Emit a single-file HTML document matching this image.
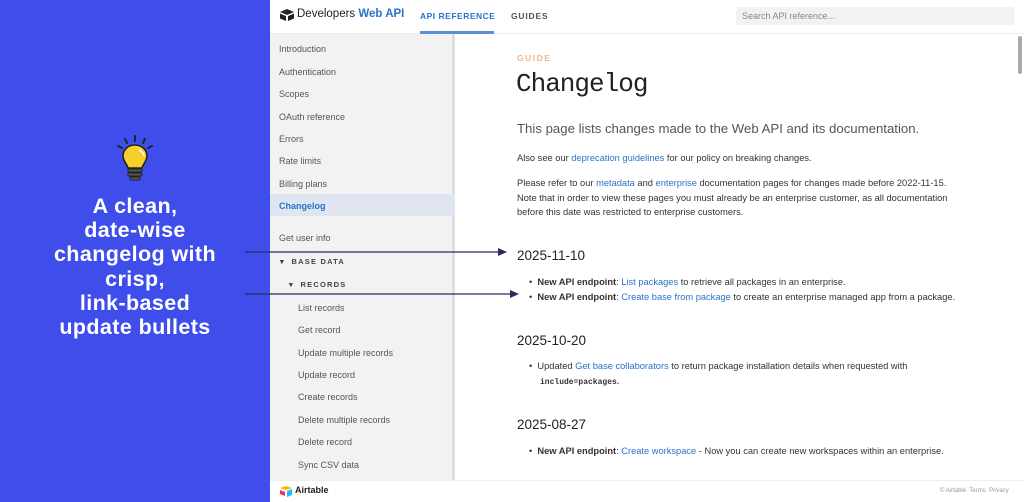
<!DOCTYPE html>
<html><head><meta charset="utf-8"><style>
*{margin:0;padding:0;box-sizing:border-box}
body{width:1024px;height:502px;overflow:hidden;position:relative;background:#fff;font-family:"Liberation Sans",sans-serif;color:#333}
.a{position:absolute;white-space:nowrap}
.left{position:absolute;left:0;top:0;width:270px;height:502px;background:#3f4eeb}
.cap{position:absolute;left:0;width:270px;top:194px;text-align:center;color:#fff;font-weight:bold;font-size:21.5px;line-height:24.2px;letter-spacing:0.4px}
.side{position:absolute;left:270px;top:34px;width:185px;height:446px;background:#f2f2f2;border-right:3px solid #ddd}
.nav{font-size:9px;color:#555}
.b{color:#2a72c8}
.t{font-size:9.3px;color:#333}
h2{position:absolute;font-weight:normal;font-size:13.5px;color:#222}
</style></head><body>
<div class="left"></div>
<svg class="a" style="left:108px;top:133px" width="52" height="52" viewBox="0 0 52 52">
<g stroke="#222" stroke-width="2" stroke-linecap="round"><line x1="27" y1="3" x2="27" y2="8"/><line x1="17" y1="6" x2="19" y2="10"/><line x1="37" y1="6" x2="35" y2="10"/><line x1="10" y1="13" x2="14" y2="15"/><line x1="44" y1="13" x2="40" y2="15"/></g>
<path d="M27 12c-7 0-12 5-12 11 0 5 4 8 5 12h14c1-4 5-7 5-12 0-6-5-11-12-11z" fill="#f7cf2a" stroke="#222" stroke-width="1.6"/>
<path d="M31 17c3 1 5 4 5 6" stroke="#fff" stroke-width="1.5" fill="none"/>
<rect x="20" y="36" width="14" height="3" rx="1" fill="#555" stroke="#222"/><rect x="20" y="40" width="14" height="3" rx="1" fill="#555" stroke="#222"/><rect x="22" y="44" width="10" height="3" rx="1" fill="#555" stroke="#222"/>
</svg>
<div class="cap">A clean,<br>date-wise<br>changelog with<br>crisp,<br>link-based<br>update bullets</div>

<div class="a" style="left:270px;top:0;width:754px;height:34px;border-bottom:1px solid #eee;background:#fff"></div>
<svg class="a" style="left:279px;top:8px" width="16" height="14" viewBox="0 0 16 14"><path d="M1 4l7-3 7 3-7 3z" fill="#222"/><path d="M1 5.5l6 2.6V13L1 10.5z" fill="#222"/><path d="M9 8.1l6-2.6V10.5L9 13z" fill="#222"/></svg>
<div class="a" style="left:297px;top:8px;font-size:11.5px;color:#222">Developers <span style="color:#2a72c8;font-weight:bold">Web API</span></div>
<div class="a" style="left:420px;top:11px;font-size:8.5px;font-weight:bold;letter-spacing:0.5px;color:#2a72c8">API REFERENCE</div>
<div class="a" style="left:420px;top:31px;width:74px;height:3px;background:#5b8fd6"></div>
<div class="a" style="left:511px;top:11px;font-size:8.5px;font-weight:bold;letter-spacing:0.8px;color:#555">GUIDES</div>
<div class="a" style="left:736px;top:7px;width:279px;height:18px;background:#f2f2f2;border-radius:3px;font-size:9px;color:#888;padding:4px 6px">Search API reference...</div>

<div class="side"></div>
<div class="a" style="left:270px;top:194px;width:185px;height:22px;background:#dfe6f2"></div>
<div class="a nav" style="left:279px;top:44px">Introduction</div>
<div class="a nav" style="left:279px;top:67px">Authentication</div>
<div class="a nav" style="left:279px;top:89px">Scopes</div>
<div class="a nav" style="left:279px;top:112px">OAuth reference</div>
<div class="a nav" style="left:279px;top:134px">Errors</div>
<div class="a nav" style="left:279px;top:156px">Rate limits</div>
<div class="a nav" style="left:279px;top:179px">Billing plans</div>
<div class="a nav" style="left:279px;top:201px;color:#2a72c8;font-weight:bold">Changelog</div>
<div class="a nav" style="left:279px;top:233px">Get user info</div>
<div class="a" style="left:280px;top:257px;font-size:7.5px;font-weight:bold;letter-spacing:1.2px;color:#444">▾ &nbsp;BASE DATA</div>
<div class="a" style="left:289px;top:280px;font-size:7.5px;font-weight:bold;letter-spacing:1.2px;color:#444">▾ &nbsp;RECORDS</div>
<div class="a nav" style="left:298px;top:303px">List records</div>
<div class="a nav" style="left:298px;top:325px">Get record</div>
<div class="a nav" style="left:298px;top:348px">Update multiple records</div>
<div class="a nav" style="left:298px;top:370px">Update record</div>
<div class="a nav" style="left:298px;top:392px">Create records</div>
<div class="a nav" style="left:298px;top:415px">Delete multiple records</div>
<div class="a nav" style="left:298px;top:437px">Delete record</div>
<div class="a nav" style="left:298px;top:460px">Sync CSV data</div>
<div class="a" style="left:270px;top:480px;width:754px;height:1px;background:#eee"></div>
<svg class="a" style="left:279px;top:485px" width="14" height="12" viewBox="0 0 14 12"><path d="M1 3l6-2 6 2-6 2z" fill="#fcb400"/><path d="M8 6l5-2v6l-5 2z" fill="#18bfff"/><path d="M1 5l5 2v4L1 9z" fill="#f82b60"/></svg>
<div class="a" style="left:295px;top:485px;font-size:9px;font-weight:bold;color:#222">Airtable</div>
<div class="a" style="left:940px;top:488px;font-size:6px;color:#999">© Airtable &nbsp;Terms &nbsp;Privacy</div>

<div class="a" style="left:1018px;top:36px;width:4px;height:38px;background:#aaa;border-radius:2px"></div>

<div class="a" style="left:517px;top:53px;font-size:8.5px;font-weight:bold;letter-spacing:1.5px;color:#f2b48a">GUIDE</div>
<div class="a" style="left:516px;top:69px;font-family:'Liberation Mono',monospace;font-size:26px;color:#222;letter-spacing:-1px">Changelog</div>
<div class="a" style="left:517px;top:121px;font-size:13.2px;color:#555">This page lists changes made to the Web API and its documentation.</div>
<div class="a t" style="left:517px;top:153px">Also see our <span class="b">deprecation guidelines</span> for our policy on breaking changes.</div>
<div class="a t" style="left:517px;top:178px">Please refer to our <span class="b">metadata</span> and <span class="b">enterprise</span> documentation pages for changes made before 2022-11-15.</div>
<div class="a t" style="left:517px;top:193px">Note that in order to view these pages you must already be an enterprise customer, as all documentation</div>
<div class="a t" style="left:517px;top:207px">before this date was restricted to enterprise customers.</div>
<h2 class="a" style="left:517px;top:248px">2025-11-10</h2>
<div class="a t" style="left:529px;top:277px">• &nbsp;<b>New API endpoint</b>: <span class="b">List packages</span> to retrieve all packages in an enterprise.</div>
<div class="a t" style="left:529px;top:292px">• &nbsp;<b>New API endpoint</b>: <span class="b">Create base from package</span> to create an enterprise managed app from a package.</div>
<h2 class="a" style="left:517px;top:333px">2025-10-20</h2>
<div class="a t" style="left:529px;top:361px">• &nbsp;Updated <span class="b">Get base collaborators</span> to return package installation details when requested with</div>
<div class="a" style="left:540px;top:377px;font-family:'Liberation Mono',monospace;font-size:8px;font-weight:bold;color:#333">include=packages<span style="font-family:'Liberation Sans'">.</span></div>
<h2 class="a" style="left:517px;top:417px">2025-08-27</h2>
<div class="a t" style="left:529px;top:446px">• &nbsp;<b>New API endpoint</b>: <span class="b">Create workspace</span> - Now you can create new workspaces within an enterprise.</div>

<svg class="a" style="left:0;top:0" width="1024" height="502">
<line x1="245" y1="252" x2="500" y2="252" stroke="#2a2a60" stroke-width="1.2"/>
<path d="M498 248l9 4-9 4z" fill="#2a2a60"/>
<line x1="245" y1="294" x2="512" y2="294" stroke="#2a2a60" stroke-width="1.2"/>
<path d="M510 290l9 4-9 4z" fill="#2a2a60"/>
</svg>
</body></html>
